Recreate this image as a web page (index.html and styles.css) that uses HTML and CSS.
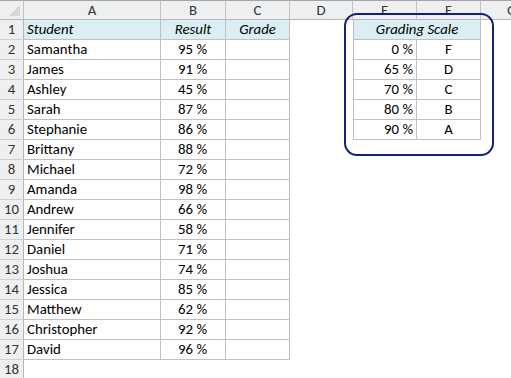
FILE: index.html
```html
<!DOCTYPE html>
<html>
<head>
<meta charset="utf-8">
<link rel="stylesheet" href="styles.css">
</head>
<body>
<div class="sheet">
  <div class="grid">
    <div class="corner"><span class="tri"></span></div>
    <div class="ch">A</div><div class="ch">B</div><div class="ch">C</div><div class="ch">D</div><div class="ch">E</div><div class="ch">F</div><div class="ch last">G</div>

    <div class="rh">1</div><div class="c t hd">Student</div><div class="c t hd ctr">Result</div><div class="c t hd ctr">Grade</div><div class="c"></div><div class="c g hd ctr span2">Grading Scale</div><div class="c"></div>
    <div class="rh">2</div><div class="c t">Samantha</div><div class="c t num">95 %</div><div class="c t"></div><div class="c"></div><div class="c g gn">0 %</div><div class="c g ctr">F</div><div class="c"></div>
    <div class="rh">3</div><div class="c t">James</div><div class="c t num">91 %</div><div class="c t"></div><div class="c"></div><div class="c g gn">65 %</div><div class="c g ctr">D</div><div class="c"></div>
    <div class="rh">4</div><div class="c t">Ashley</div><div class="c t num">45 %</div><div class="c t"></div><div class="c"></div><div class="c g gn">70 %</div><div class="c g ctr">C</div><div class="c"></div>
    <div class="rh">5</div><div class="c t">Sarah</div><div class="c t num">87 %</div><div class="c t"></div><div class="c"></div><div class="c g gn">80 %</div><div class="c g ctr">B</div><div class="c"></div>
    <div class="rh">6</div><div class="c t">Stephanie</div><div class="c t num">86 %</div><div class="c t"></div><div class="c"></div><div class="c g gn">90 %</div><div class="c g ctr">A</div><div class="c"></div>
    <div class="rh">7</div><div class="c t">Brittany</div><div class="c t num">88 %</div><div class="c t"></div><div class="c rest"></div>
    <div class="rh">8</div><div class="c t">Michael</div><div class="c t num">72 %</div><div class="c t"></div><div class="c rest"></div>
    <div class="rh">9</div><div class="c t">Amanda</div><div class="c t num">98 %</div><div class="c t"></div><div class="c rest"></div>
    <div class="rh">10</div><div class="c t">Andrew</div><div class="c t num">66 %</div><div class="c t"></div><div class="c rest"></div>
    <div class="rh">11</div><div class="c t">Jennifer</div><div class="c t num">58 %</div><div class="c t"></div><div class="c rest"></div>
    <div class="rh">12</div><div class="c t">Daniel</div><div class="c t num">71 %</div><div class="c t"></div><div class="c rest"></div>
    <div class="rh">13</div><div class="c t">Joshua</div><div class="c t num">74 %</div><div class="c t"></div><div class="c rest"></div>
    <div class="rh">14</div><div class="c t">Jessica</div><div class="c t num">85 %</div><div class="c t"></div><div class="c rest"></div>
    <div class="rh">15</div><div class="c t">Matthew</div><div class="c t num">62 %</div><div class="c t"></div><div class="c rest"></div>
    <div class="rh">16</div><div class="c t">Christopher</div><div class="c t num">92 %</div><div class="c t"></div><div class="c rest"></div>
    <div class="rh">17</div><div class="c t">David</div><div class="c t num">96 %</div><div class="c t"></div><div class="c rest"></div>
    <div class="rh">18</div><div class="c full"></div>
  </div>
  <div class="callout"></div>
</div>
</body>
</html>
```

FILE: styles.css
```css
html, body {
  margin: 0;
  padding: 0;
  background: #ffffff;
}
body {
  font-family: "Carlito", "Lato", "Liberation Sans", sans-serif;
  font-size: 14.8px;
  color: #000;
}
.sheet {
  position: relative;
  width: 511px;
  height: 378px;
  overflow: hidden;
}
.grid {
  display: grid;
  grid-template-columns: 24px 137px 65px 64px 63px 64px 64px 30px;
  grid-auto-rows: 20px;
}
.grid > div {
  box-sizing: border-box;
  white-space: nowrap;
  overflow: hidden;
  line-height: 19px;
}
.corner {
  position: relative;
  background: #eeeff1;
  border-top: 1px solid #a5a5a5;
  border-right: 1px solid #c3c3c3;
  border-bottom: 1px solid #b7b7b7;
}
.tri {
  position: absolute;
  right: 3px;
  bottom: 3px;
  width: 0;
  height: 0;
  border-left: 11px solid transparent;
  border-bottom: 11px solid #d6d6d6;
}
.ch {
  background: #eeeff1;
  border-top: 1px solid #a5a5a5;
  border-right: 1px solid #c3c3c3;
  border-bottom: 1px solid #b7b7b7;
  text-align: center;
  color: #333;
  line-height: 18px !important;
}
.ch.last { border-right: none; text-indent: 26px; }
.rh {
  background: #eeeff1;
  border-right: 1px solid #b7b7b7;
  border-bottom: 1px solid #d0d0d0;
  text-align: center;
  color: #333;
}
.c { padding: 0 3px; }
.t {
  border-right: 1px solid #c0c0c0;
  border-bottom: 1px solid #c0c0c0;
}
.g {
  border-right: 1px solid #c0c0c0;
  border-bottom: 1px solid #c0c0c0;
}
.gn {
  border-left: 1px solid #c0c0c0;
  text-align: right;
  padding-right: 3px;
}
.hd {
  background: #daeef3;
  font-style: italic;
}
.g.hd { border-left: 1px solid #c0c0c0; }
.ctr { text-align: center; }
.num { text-align: right; padding-right: 18px; }
.span2 { grid-column: span 2; }
.rest { grid-column: span 4; }
.full { grid-column: span 7; }
.callout {
  position: absolute;
  left: 344px;
  top: 13px;
  width: 150px;
  height: 143px;
  box-sizing: border-box;
  border: 2.5px solid #12217a;
  border-radius: 13px;
}
```
